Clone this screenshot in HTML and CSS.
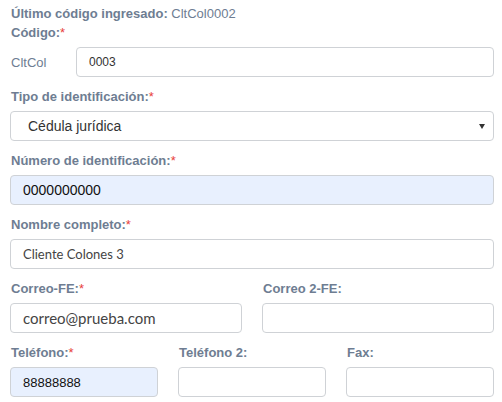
FILE: index.html
```html
<!DOCTYPE html>
<html lang="es">
<head>
<meta charset="utf-8">
<link rel="stylesheet" href="styles.css">
</head>
<body>
<form class="form">
  <div class="last-code"><span class="lbl">Último código ingresado:</span> CltCol0002</div>
  <div class="group">
    <div class="lbl">Código:<span class="req">*</span></div>
    <div class="code-row">
      <span class="prefix">CltCol</span>
      <div class="input small">0003</div>
    </div>
  </div>
  <div class="group">
    <div class="lbl">Tipo de identificación:<span class="req">*</span></div>
    <div class="input select"><span>Cédula jurídica</span><span class="caret"></span></div>
  </div>
  <div class="group">
    <div class="lbl">Número de identificación:<span class="req">*</span></div>
    <div class="input filled big">0000000000</div>
  </div>
  <div class="group">
    <div class="lbl">Nombre completo:<span class="req">*</span></div>
    <div class="input lato sm">Cliente Colones 3</div>
  </div>
  <div class="row two">
    <div class="group">
      <div class="lbl">Correo-FE:<span class="req">*</span></div>
      <div class="input lato md">correo@prueba.com</div>
    </div>
    <div class="group">
      <div class="lbl">Correo 2-FE:</div>
      <div class="input"></div>
    </div>
  </div>
  <div class="row three">
    <div class="group">
      <div class="lbl">Teléfono:<span class="req">*</span></div>
      <div class="input filled">88888888</div>
    </div>
    <div class="group">
      <div class="lbl">Teléfono 2:</div>
      <div class="input"></div>
    </div>
    <div class="group">
      <div class="lbl">Fax:</div>
      <div class="input"></div>
    </div>
  </div>
</form>
</body>
</html>
```

FILE: styles.css
```css
* { box-sizing: border-box; }
html, body { margin: 0; background: #fff; }
body {
  font-family: "Liberation Sans", Arial, sans-serif;
  font-size: 13px;
  color: #333;
  width: 502px;
  height: 402px;
  overflow: hidden;
}
.form {
  padding: 4px 8px 0 10px;
}
.last-code {
  line-height: 19px;
  color: #6e7d92;
  padding-left: 1px;
}
.lbl {
  font-weight: bold;
  color: #6e7d92;
  line-height: 19px;
}
.group > .lbl {
  padding-left: 1px;
  margin-bottom: 5px;
}
.req {
  color: #e8403a;
  font-weight: normal;
}
.group { margin-bottom: 10px; }
.code-row {
  display: grid;
  grid-template-columns: 66px 1fr;
  align-items: center;
}
.prefix {
  color: #6e7d92;
  padding-left: 1px;
}
.input {
  height: 30px;
  border: 1px solid #cfd2d6;
  border-radius: 4px;
  background: #fff;
  padding: 0 12px;
  display: flex;
  align-items: center;
  font-size: 13px;
  color: #222;
}
.input.small { font-size: 12px; color: #333; }
.input.big { font-size: 14px; }
.input.filled { background: #e8f0fe; color: #111; }
.input.lato { font-family: Lato, sans-serif; color: #444; }
.input.sm { font-size: 13px; }
.input.md { font-size: 15px; }
.input.select {
  justify-content: space-between;
  padding: 0 6px 0 17px;
  font-size: 14px;
  color: #333;
}
.caret {
  width: 0;
  height: 0;
  border-left: 3px solid transparent;
  border-right: 3px solid transparent;
  border-top: 5px solid #333;
  margin-right: 2px;
}
.row {
  display: grid;
  column-gap: 20px;
}
.row.two { grid-template-columns: 1fr 1fr; }
.row.three { grid-template-columns: 1fr 1fr 1fr; }
```
